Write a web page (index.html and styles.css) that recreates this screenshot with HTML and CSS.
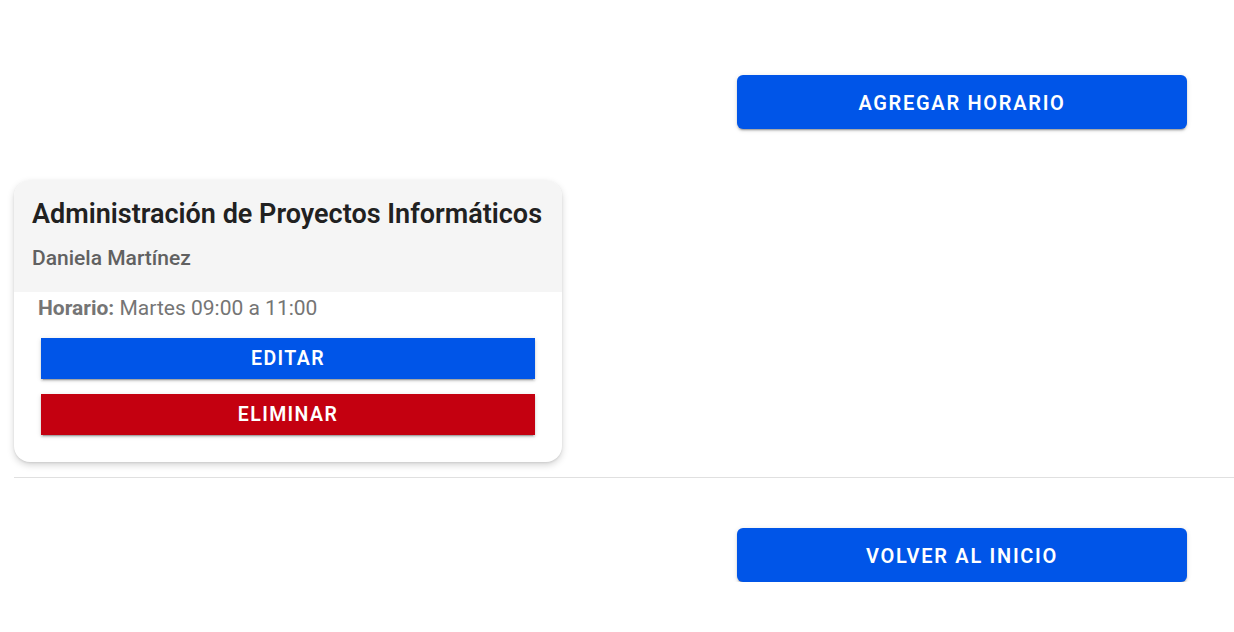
FILE: index.html
```html
<!DOCTYPE html>
<html lang="es">
<head>
<meta charset="utf-8">
<title>Horarios</title>
<link rel="stylesheet" href="styles.css">
</head>
<body>
<main class="page">
  <div class="actions actions-top">
    <button class="btn btn-primary btn-lg">AGREGAR HORARIO</button>
  </div>
  <section class="cards">
    <article class="card">
      <header class="card-head">
        <h2 class="card-title">Administración de Proyectos Informáticos</h2>
        <p class="card-sub">Daniela Martínez</p>
      </header>
      <div class="card-body">
        <p class="schedule"><strong>Horario:</strong> Martes 09:00 a 11:00</p>
        <button class="btn btn-primary btn-sm">EDITAR</button>
        <button class="btn btn-danger btn-sm">ELIMINAR</button>
      </div>
    </article>
  </section>
  <hr class="divider">
  <div class="actions actions-bottom">
    <button class="btn btn-primary btn-lg">VOLVER AL INICIO</button>
  </div>
</main>
</body>
</html>
```
FILE: styles.css
```css
* { box-sizing: border-box; }
html, body { margin: 0; padding: 0; background: #fff; }
body { font-family: Roboto, "Noto Sans", Arial, sans-serif; color: #212121; }

.page { width: 1234px; }

.actions {
  display: flex;
  justify-content: flex-end;
  padding-right: 47px;
}
.actions-top { padding-top: 75px; }
.actions-bottom { padding-top: 50px; }

.btn {
  border: none;
  padding: 0;
  font-family: Roboto, Arial, sans-serif;
  font-weight: 600;
  color: #fff;
  letter-spacing: 1.7px;
  cursor: pointer;
  box-shadow: 0 3px 1px -2px rgba(0,0,0,.2), 0 2px 2px 0 rgba(0,0,0,.14), 0 1px 5px 0 rgba(0,0,0,.12);
}
.btn-primary { background: #0055e8; }
.btn-danger { background: #c40010; }

.btn-lg {
  width: 450px;
  height: 54px;
  padding-top: 2px;
  border-radius: 6px;
  font-size: 20px;
}
.btn-sm {
  display: block;
  width: 494px;
  height: 41px;
  border-radius: 0;
  font-size: 19.5px;
  letter-spacing: 1.4px;
  margin-left: 3px;
}
.btn-sm + .btn-sm { margin-top: 15px; }

.cards { padding: 51px 0 0 14px; }

.card {
  width: 548px;
  border-radius: 16px;
  background: #fff;
  overflow: hidden;
  box-shadow: 0 3px 7px rgba(0,0,0,.17), 0 1px 2px rgba(0,0,0,.08);
}
.card-head {
  background: #f5f5f5;
  padding: 18px 18px 0 18px;
  height: 112px;
}
.card-title {
  margin: 0;
  font-size: 27px;
  font-weight: 600;
  line-height: 32px;
  color: #212121;
  white-space: nowrap;
}
.card-sub {
  margin: 16px 0 0;
  font-size: 21px;
  font-weight: 500;
  line-height: 24px;
  color: #616161;
}
.card-body {
  padding: 4px 24px 27px 24px;
}
.schedule {
  margin: 0 0 18px;
  font-size: 21px;
  line-height: 24px;
  color: #757575;
}
.schedule strong { font-weight: 700; }

.divider {
  margin: 15px 0 0 14px;
  border: none;
  border-top: 1px solid #e0e0e0;
  height: 0;
}
```
